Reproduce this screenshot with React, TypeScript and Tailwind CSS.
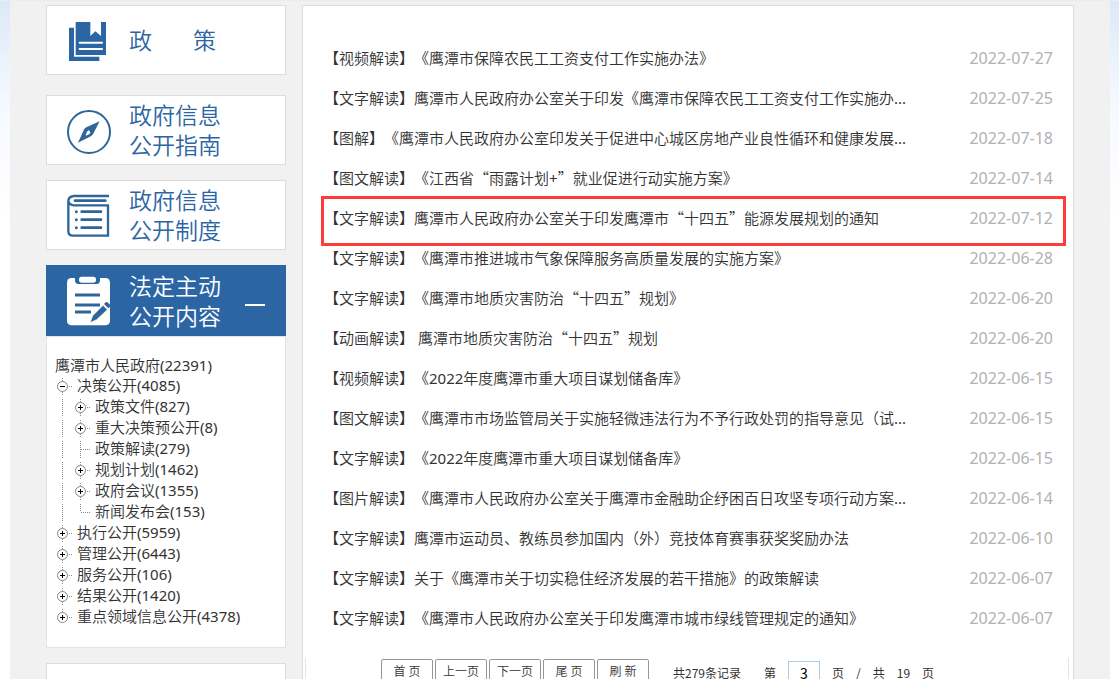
import React from "react";

type NavCardProps = { icon: React.ReactNode; lines: string[] };

const titleClass = "text-[23px] leading-[30px]";

function BooksIcon() {
  return (
    <svg width="44" height="50" viewBox="0 0 132 150" aria-hidden="true" className="shrink-0">
      <path d="M6 38H97V138H6Z" fill="#2b65a4" />
      <path d="M21 16H122V125H21Z" fill="#fff" />
      <path d="M26 21H70V63L85 49L102 63V21H117V120H26Z" fill="#2b65a4" />
      <path d="M38 83H105M38 102H105" stroke="#fff" strokeWidth="6" strokeLinecap="round" />
    </svg>
  );
}

function CompassIcon() {
  return (
    <svg width="44" height="50" viewBox="0 0 132 150" aria-hidden="true" className="shrink-0">
      <circle cx="66" cy="81" r="63" fill="none" stroke="#2f6699" strokeWidth="6" />
      <path
        d="M98 49L58 67Q51 71 49 78L33 113L73 93Q79 89 81 82ZM64 76Q69 77 70 83Q69 88 56 92Q58 80 64 76Z"
        fill="#2f6699"
        fillRule="evenodd"
      />
    </svg>
  );
}

function NotebookIcon() {
  return (
    <svg
      width="44"
      height="50"
      viewBox="0 0 132 150"
      fill="none"
      stroke="#2f6699"
      strokeWidth="7"
      aria-hidden="true"
      className="shrink-0"
    >
      <path d="M126 18H20Q4 20 4 34V124Q5 137 17 137H123V46H20Q5 44 4 32" />
      <path d="M24 32H115M44 65H102M44 89H102M44 113H102" strokeWidth="8" strokeLinecap="round" />
      <path d="M28 65h.1M28 89h.1M28 113h.1" strokeWidth="9" strokeLinecap="round" />
    </svg>
  );
}

function ClipboardIcon() {
  return (
    <svg width="44" height="50" viewBox="0 0 132 150" aria-hidden="true" className="shrink-0">
      <rect x="0" y="6" width="129" height="142" rx="13" fill="#fff" />
      <path d="M24 0H99V13Q99 24 89 24H34Q24 24 24 13Z" fill="#2b65a4" />
      <rect x="36" y="2" width="51" height="18" rx="8" fill="#fff" />
      <path d="M24 57H99M24 87H99M24 108H72" stroke="#2f6699" strokeWidth="9" />
      <path d="M69 140L77 119L108 88L121 101L89 131Z" fill="#2f6699" stroke="#fff" strokeWidth="2" />
      <path d="M111 84L117 78Q120 77 123 80L130 87V92L124 97Z" fill="#2f6699" />
    </svg>
  );
}

function NavCard({ icon, lines }: NavCardProps) {
  return (
    <a
      href="#"
      className="flex h-[70px] items-center gap-[18px] border border-[#dcdcdc] bg-white pl-5 text-[#2b65a4]"
    >
      {icon}
      <span className={titleClass}>
        {lines.map((line) => (
          <span key={line} className="block">
            {line}
          </span>
        ))}
      </span>
    </a>
  );
}

type Node = { label: string; level: 1 | 2; kind: "plus" | "minus" | "leaf"; last?: boolean };

const nodes: Node[] = [
  { label: "决策公开(4085)", level: 1, kind: "minus" },
  { label: "政策文件(827)", level: 2, kind: "plus" },
  { label: "重大决策预公开(8)", level: 2, kind: "plus" },
  { label: "政策解读(279)", level: 2, kind: "leaf" },
  { label: "规划计划(1462)", level: 2, kind: "plus" },
  { label: "政府会议(1355)", level: 2, kind: "plus" },
  { label: "新闻发布会(153)", level: 2, kind: "leaf", last: true },
  { label: "执行公开(5959)", level: 1, kind: "plus" },
  { label: "管理公开(6443)", level: 1, kind: "plus" },
  { label: "服务公开(106)", level: 1, kind: "plus" },
  { label: "结果公开(1420)", level: 1, kind: "plus" },
  { label: "重点领域信息公开(4378)", level: 1, kind: "plus", last: true },
];

function TreeCell({ kind, last }: { kind: "plus" | "minus" | "leaf" | "line"; last?: boolean }) {
  return (
    <svg
      width="18"
      height="21"
      viewBox="0 0 18 21"
      fill="none"
      stroke="#8a8a8a"
      aria-hidden="true"
      className="shrink-0"
    >
      <path d={last ? "M7.5 3V11" : "M7.5 3V20"} strokeDasharray="1 1" />
      {kind !== "line" && <path d="M8 11.5H18" strokeDasharray="1 1" />}
      {(kind === "plus" || kind === "minus") && (
        <>
          <circle cx="7.5" cy="11.5" r="5" fill="#fff" stroke="#868a80" />
          <path d={kind === "plus" ? "M5 11.5H10M7.5 9V14" : "M5 11.5H10"} stroke="#000" />
        </>
      )}
    </svg>
  );
}

const articles: [string, string][] = [
  ["【视频解读】《鹰潭市保障农民工工资支付工作实施办法》", "2022-07-27"],
  ["【文字解读】鹰潭市人民政府办公室关于印发《鹰潭市保障农民工工资支付工作实施办...", "2022-07-25"],
  ["【图解】《鹰潭市人民政府办公室印发关于促进中心城区房地产业良性循环和健康发展...", "2022-07-18"],
  ["【图文解读】《江西省“雨露计划+”就业促进行动实施方案》", "2022-07-14"],
  ["【文字解读】鹰潭市人民政府办公室关于印发鹰潭市“十四五”能源发展规划的通知", "2022-07-12"],
  ["【文字解读】《鹰潭市推进城市气象保障服务高质量发展的实施方案》", "2022-06-28"],
  ["【文字解读】《鹰潭市地质灾害防治“十四五”规划》", "2022-06-20"],
  ["【动画解读】 鹰潭市地质灾害防治“十四五”规划", "2022-06-20"],
  ["【视频解读】《2022年度鹰潭市重大项目谋划储备库》", "2022-06-15"],
  ["【图文解读】《鹰潭市市场监管局关于实施轻微违法行为不予行政处罚的指导意见（试...", "2022-06-15"],
  ["【文字解读】《2022年度鹰潭市重大项目谋划储备库》", "2022-06-15"],
  ["【图片解读】《鹰潭市人民政府办公室关于鹰潭市金融助企纾困百日攻坚专项行动方案...", "2022-06-14"],
  ["【文字解读】鹰潭市运动员、教练员参加国内（外）竞技体育赛事获奖奖励办法", "2022-06-10"],
  ["【文字解读】关于《鹰潭市关于切实稳住经济发展的若干措施》的政策解读", "2022-06-07"],
  ["【文字解读】《鹰潭市人民政府办公室关于印发鹰潭市城市绿线管理规定的通知》", "2022-06-07"],
];

/* Curly quotes take their full-width form from the Chinese face;
   digits and Latin punctuation are set a step heavier than the characters. */
function MixedText({ text }: { text: string }) {
  return (
    <>
      {text.split(/([“”]|[0-9()+.]+)/).map((part, i) => {
        if (part === "“" || part === "”") {
          return (
            <span key={i} className="font-['Noto_Sans_CJK_SC',sans-serif]">
              {part}
            </span>
          );
        }
        if (/^[0-9()+.]+$/.test(part)) {
          return (
            <span key={i} className="font-normal">
              {part}
            </span>
          );
        }
        return part;
      })}
    </>
  );
}

const pagerButtons = ["首 页", "上一页", "下一页", "尾 页", "刷 新"];

export default function App() {
  return (
    <div
      lang="zh-CN"
      className="h-screen overflow-hidden border-t border-[#ececec] bg-linear-to-b from-[#dce9f6] via-[#f5f9ff] via-[100px] to-white to-[220px] pr-[9px] pl-[10px] font-['Noto_Sans','Noto_Sans_CJK_SC',sans-serif] text-[15px] font-[350] text-[#333] [text-spacing-trim:space-all]"
    >
      <div className="flex min-h-full items-start gap-4 bg-[#f1f1f1] px-9 pt-1">
        <aside className="w-60 shrink-0">
          <nav className="flex flex-col gap-[15px]">
            <a
              href="#"
              className="mb-[5px] flex h-[70px] items-center gap-[18px] border border-[#dcdcdc] bg-white pl-5 text-[#2b65a4]"
            >
              <BooksIcon />
              <span className={`flex gap-[41px] ${titleClass}`}>
                <span>政</span>
                <span>策</span>
              </span>
            </a>
            <NavCard icon={<CompassIcon />} lines={["政府信息", "公开指南"]} />
            <NavCard icon={<NotebookIcon />} lines={["政府信息", "公开制度"]} />
            <button
              type="button"
              aria-expanded="true"
              className="flex h-[71px] items-center bg-[#2b65a4] px-[21px] text-left text-white"
            >
              <ClipboardIcon />
              <span className={`ml-[18px] flex-1 ${titleClass}`}>
                <span className="block">法定主动</span>
                <span className="block">公开内容</span>
              </span>
              <span className="mt-2 h-[2px] w-5 bg-white" />
            </button>
          </nav>
          <div className="border border-[#e2e2e2] bg-white px-2 pt-[18px] pb-5">
            <a href="#" className="block h-5 leading-5">
              <MixedText text="鹰潭市人民政府(22391)" />
            </a>
            <ul>
              {nodes.map((n) => (
                <li key={n.label} className="flex h-[21px] items-center">
                  {n.level === 2 && <TreeCell kind="line" />}
                  <TreeCell kind={n.kind} last={n.last} />
                  <a href="#" className="pl-1 leading-[21px] whitespace-nowrap">
                    <MixedText text={n.label} />
                  </a>
                </li>
              ))}
            </ul>
          </div>
          <div className="mt-[15px] h-[70px] border border-[#dcdcdc] bg-white" />
        </aside>

        <main className="min-w-0 flex-1 border border-[#dcdcdc] bg-white pt-8">
          <ul className="pr-5 pl-[21px]">
            {articles.map(([title, date], i) => (
              <li key={i} className="relative flex h-10 items-center justify-between">
                <a href="#" className="truncate">
                  <MixedText text={title} />
                </a>
                <time className="shrink-0 text-base font-normal text-[#b2b2b2]">{date}</time>
                {i === 4 && (
                  <span className="pointer-events-none absolute -top-[2px] -right-[13px] -left-[3px] h-[50px] border-[3px] border-[#ff3b3b]" />
                )}
              </li>
            ))}
          </ul>
          <div className="mt-5 mr-1 ml-[2px] flex h-16 items-start border-x border-[#dfe6ea] pt-px pl-[75px] text-xs leading-none whitespace-nowrap">
            <div className="flex gap-[2px]">
              {pagerButtons.map((label) => (
                <button
                  key={label}
                  type="button"
                  className="h-[25px] w-[52px] rounded-xs border border-[#9a9696] bg-white"
                >
                  {label}
                </button>
              ))}
            </div>
            <div className="mt-[2px] ml-6 flex h-6 items-center font-['Noto_Sans_CJK_SC',sans-serif] font-normal">
              <span>共279条记录</span>
              <label htmlFor="page" className="ml-[23px]">
                第
              </label>
              <input
                id="page"
                type="text"
                defaultValue="3"
                className="mx-3 h-6 w-8 border border-[#a9cbee] bg-white text-center text-sm leading-none text-black"
              />
              <span className="flex gap-3">
                <span>页</span>
                <span>/</span>
                <span>共</span>
                <span>19</span>
                <span>页</span>
              </span>
            </div>
          </div>
        </main>
      </div>
    </div>
  );
}
